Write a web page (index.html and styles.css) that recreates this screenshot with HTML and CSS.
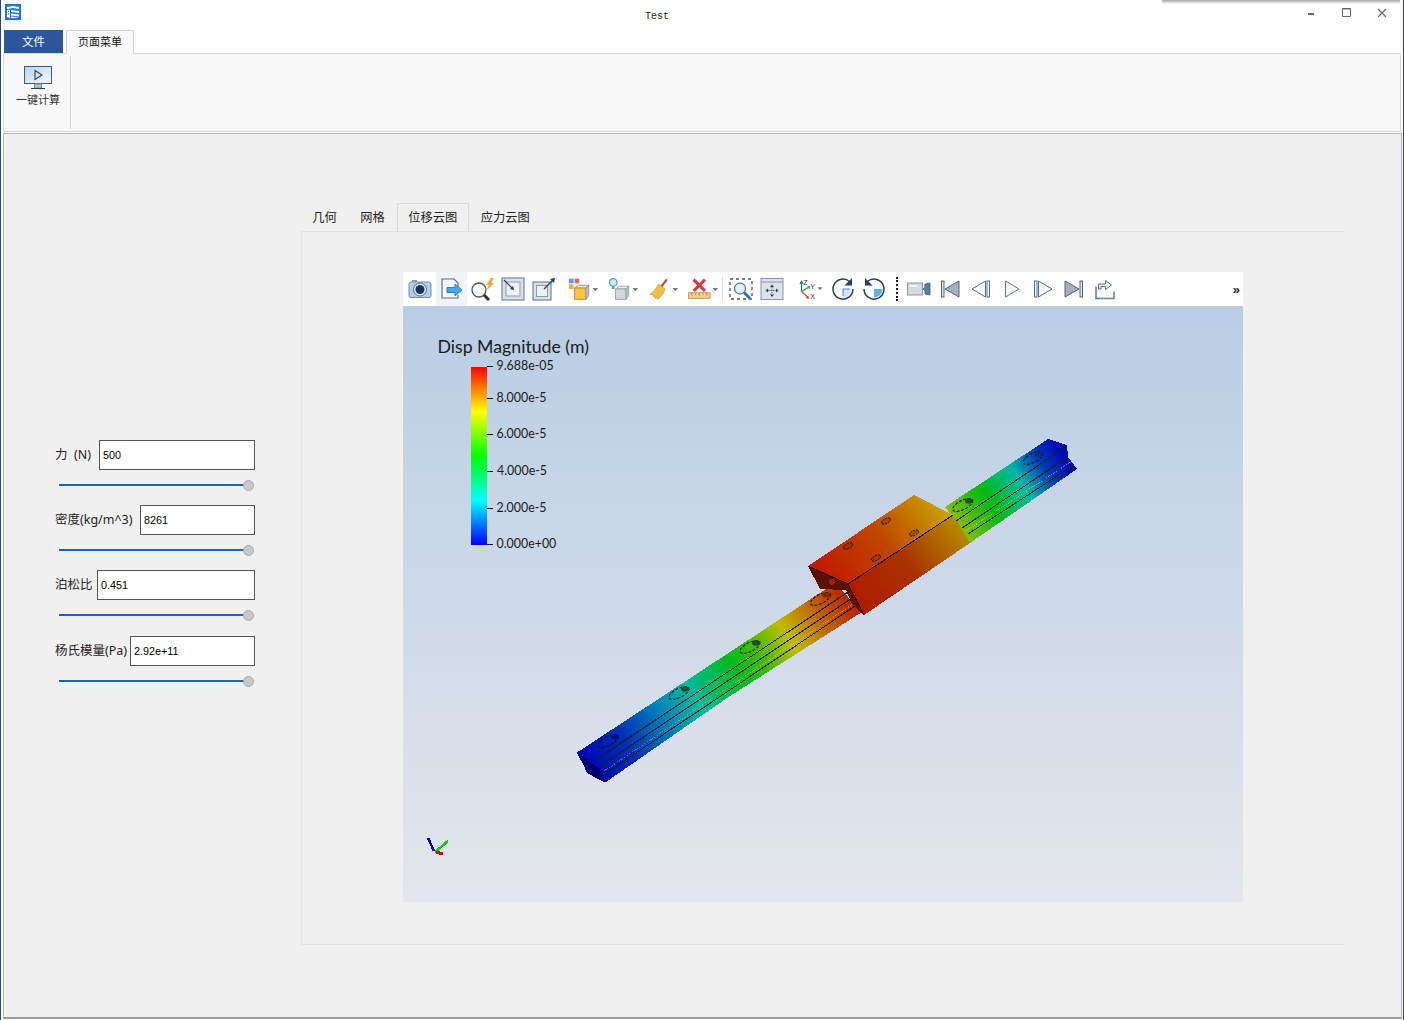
FILE: index.html
```html
<!DOCTYPE html>
<html lang="zh">
<head>
<meta charset="utf-8">
<title>Test</title>
<link rel="stylesheet" href="styles.css">
</head>
<body>
<div class="window">
  <div class="other-shadow"></div>
  <header class="titlebar">
    <svg class="app-icon" viewBox="0 0 16 16">
      <rect width="16" height="16" fill="#1c74e4"/>
      <path d="M2 3l6-1 6 1v2L8 4 2 5zM2 6l3-.5V14l-3-1zM6 6l8 1v2L6 8zM6 9.500l8 1V12.500l-8-1zM6 12.500l8 .8-6 1-2-.4z" fill="#fff"/>
      <path d="M3 7.500h1M3 10h1" stroke="#1c74e4"/>
    </svg>
    <div class="title">Test</div>
    <div class="win-controls">
      <span class="win-btn"><svg width="10" height="10" viewBox="0 0 10 10"><rect x="2" y="6" width="6" height="2" fill="#666"/></svg></span>
      <span class="win-btn win-btn-max"><svg width="10" height="10" viewBox="0 0 10 10"><path d="M.5 .5h8v8h-8z" fill="none" stroke="#666"/><path d="M0 1h9" stroke="#666"/></svg></span>
      <span class="win-btn win-btn-close"><svg width="10" height="10" viewBox="0 0 10 10"><path d="M1 1l8 8M9 1l-8 8" stroke="#666" stroke-width="1.100"/></svg></span>
    </div>
  </header>

  <nav class="menu-tabs">
    <div class="menu-file">文件</div>
    <div class="menu-page">页面菜单</div>
  </nav>

  <section class="ribbon">
    <div class="ribbon-group">
      <svg class="ribbon-icon" viewBox="0 0 28 24">
        <defs><linearGradient id="scr" x1="0" y1="0" x2="1" y2="1"><stop offset="0" stop-color="#bcd3ec"/><stop offset="1" stop-color="#f4f8fc"/></linearGradient></defs>
        <rect x=".5" y=".5" width="27" height="17" fill="url(#scr)" stroke="#40597c"/>
        <path d="M11 4.500l7 4.500-7 4.500z" fill="none" stroke="#24406e" stroke-width="1.100"/>
        <path d="M10.500 18h7v4h-7z" fill="#b7c3d0" stroke="#7d8ea3"/>
        <path d="M7 22.500h14" stroke="#24406e"/>
      </svg>
      <div class="ribbon-label">一键计算</div>
    </div>
  </section>

  <main class="panel">
    <form class="form">
      <div class="field"><label class="lbl lbl-force">力&nbsp;&nbsp;(N)</label><div class="input">500</div></div>
      <div class="slider"><span class="knob"></span></div>
      <div class="field"><label class="lbl lbl-density">密度(kg/m^3)</label><div class="input">8261</div></div>
      <div class="slider"><span class="knob"></span></div>
      <div class="field"><label class="lbl lbl-poisson">泊松比</label><div class="input">0.451</div></div>
      <div class="slider slider-last"><span class="knob"></span></div>
      <div class="field"><label class="lbl lbl-young">杨氏模量(Pa)</label><div class="input">2.92e+11</div></div>
      <div class="slider"><span class="knob"></span></div>
    </form>

    <section class="tabs">
      <div class="tab-bar">
        <div class="tab">几何</div>
        <div class="tab">网格</div>
        <div class="tab tab-active">位移云图</div>
        <div class="tab">应力云图</div>
      </div>
      <div class="tab-pane">
        <div class="viewer">
          <div class="toolbar">
            <span class="tb"><svg viewBox="0 0 24 24"><rect x="1" y="5" width="22" height="15.500" rx="2" fill="#b5cde6" stroke="#6f8fb3"/><rect x="4" y="3" width="5" height="2" fill="#7f9cbd"/><circle cx="12" cy="12.500" r="6.500" fill="#dfe9f4" stroke="#54708f"/><circle cx="12" cy="12.500" r="4.500" fill="#16315f"/></svg></span>
            <span class="tb tb-hover"><svg viewBox="0 0 24 24"><path d="M19 10V6l-4-4H3v19h16v-3" fill="#f4f6f8" stroke="#666c76" stroke-width="1.200"/><path d="M8 10.500h8V7l7 6-7 6v-3.500H8z" fill="#4aa8e6" stroke="#2f7fc0"/></svg></span>
            <span class="tb"><svg viewBox="0 0 24 24"><circle cx="9" cy="13" r="7" fill="#fbfcfd" stroke="#555" stroke-width="1.300"/><path d="M14 18l5 5" stroke="#333" stroke-width="3"/><path d="M21 1l-5 7h3l-3 6 8-8h-3l3-5z" fill="#f2a636"/></svg></span>
            <span class="tb"><svg viewBox="0 0 24 24"><rect x="1" y="1" width="22" height="22" fill="#dbe0e6" stroke="#7b8ea8" stroke-width="1.300"/><rect x="5" y="5" width="14" height="14" fill="#eef1f4" stroke="#8d9aab"/><path d="M3 3l9 9" stroke="#1f3a6b" stroke-width="1.200"/><path d="M13 13l-4-1 3-3z" fill="#1f3a6b"/></svg></span>
            <span class="tb"><svg viewBox="0 0 24 24"><rect x="1" y="5" width="18" height="18" fill="#dbe0e6" stroke="#7b8ea8" stroke-width="1.300"/><rect x="4.500" y="8.500" width="11" height="11" fill="#eef1f4" stroke="#8d9aab"/><path d="M12 12l9-9" stroke="#1f3a6b" stroke-width="1.200"/><path d="M23 1l-1 5-4-4z" fill="#1f3a6b"/></svg></span>
            <span class="tb tb-drop"><svg viewBox="0 0 34 24"><rect x="1" y="1" width="5" height="5" fill="#5aa5e8"/><rect x="7" y="1" width="5" height="5" fill="#d86a6a"/><rect x="1" y="7" width="5" height="5" fill="#f0b040"/><path d="M7 11l4-3h11l-3 3z" fill="#e3e6ea" stroke="#8a929c"/><rect x="7" y="11" width="12" height="12" fill="#fbc53e" stroke="#c09030"/><path d="M19 11l3-3v11l-3 4z" fill="#bcc3cb" stroke="#8a929c"/><path d="M26 11h6l-3 3z" fill="#777"/></svg></span>
            <span class="tb tb-drop"><svg viewBox="0 0 34 24"><circle cx="5.500" cy="5" r="4" fill="#cfe8fb" stroke="#4f9ed8" stroke-width="1.300"/><path d="M4 9h3v3H4z" fill="#888"/><path d="M8 12l4-3h10l-3 3z" fill="#eef0f2" stroke="#99a1aa"/><rect x="8" y="12" width="11" height="11" fill="#d3d8dd" stroke="#99a1aa"/><path d="M19 12l3-3v10l-3 4z" fill="#b8bec6" stroke="#99a1aa"/><path d="M26 11h6l-3 3z" fill="#777"/></svg></span>
            <span class="tb tb-drop"><svg viewBox="0 0 34 24"><path d="M19 1l2 1.500-6 8-2-1.500z" fill="#a8632a"/><path d="M11 7l7 5c-1 4-5 9-8 11l-1-3-1 2-2-2 0-2-4 0c3-2 7-7 9-11z" fill="#f3bd48" stroke="#c98f2a" stroke-width=".7"/><path d="M26 11h6l-3 3z" fill="#777"/></svg></span>
            <span class="tb tb-drop"><svg viewBox="0 0 34 24"><path d="M6 2l12 12M18 2L6 14" stroke="#d93b3b" stroke-width="3.200"/><rect x="0.500" y="16" width="23" height="6" fill="#f4cf88" stroke="#c99a4b"/><path d="M4 16v3M8 16v2M12 16v3M16 16v2M20 16v3" stroke="#a8762c" stroke-width=".8"/><path d="M26 11h6l-3 3z" fill="#777"/></svg></span>
            <span class="tb-sep"></span>
            <span class="tb"><svg viewBox="0 0 24 24"><rect x="1" y="2" width="22" height="20" fill="none" stroke="#3c5579" stroke-width="1.300" stroke-dasharray="3 3"/><circle cx="11" cy="11.500" r="5.500" fill="#e4eef7" stroke="#4c86bb" stroke-width="1.300"/><path d="M15 15.500l6 6" stroke="#2d6ea8" stroke-width="2.600"/></svg></span>
            <span class="tb"><svg viewBox="0 0 24 24"><rect x="1" y="1.500" width="22" height="21" fill="#dde2e8" stroke="#8595a9"/><path d="M1 5h22" stroke="#8595a9"/><path d="M12 7.500l2 2.500h-4zM12 20l2-2.500h-4zM5.500 13.500L8 11.500v4zM18.500 13.500L16 11.500v4z" fill="#27405f"/><path d="M12 10v7M8 13.500h8" stroke="#27405f" stroke-width=".8" stroke-dasharray="1.500 1"/></svg></span>
            <span class="tb-gap"></span>
            <span class="tb tb-drop tb-axes"><svg viewBox="0 0 34 24"><path d="M4 15V5" stroke="#2266c4" stroke-width="1.400"/><path d="M4 2l2.500 4h-5z" fill="#2266c4"/><path d="M4 15l8-5" stroke="#2ea844" stroke-width="1.400"/><path d="M14 8.500l-1 4-2.500-3.500z" fill="#2ea844"/><path d="M4 15l7 6" stroke="#d83a3a" stroke-width="1.400"/><path d="M13 23l-4-.6 2.400-3z" fill="#d83a3a"/><text x="6" y="7" class="axis-letter">Z</text><text x="14" y="12.500" class="axis-letter">Y</text><text x="14" y="23" class="axis-letter">X</text><path d="M22 10h6l-3 3z" fill="#777"/></svg></span>
            <span class="tb"><svg viewBox="0 0 24 24"><path d="M12 12h8.500A8.500 8.500 0 0 1 12 20.500z" fill="#cfe3f5"/><path d="M12 12h7M12 12v7" stroke="#2f7fc0" stroke-width=".9"/><path d="M18.500 4.500A10 10 0 1 0 22 12" fill="none" stroke="#27405f" stroke-width="1.500"/><path d="M21 1v7.500h-7.500z" fill="#27405f"/></svg></span>
            <span class="tb"><svg viewBox="0 0 24 24"><path d="M12 12h8.500A8.500 8.500 0 0 1 12 20.500z" fill="#5eaee8"/><path d="M5.500 4.500A10 10 0 1 1 2 12" fill="none" stroke="#27405f" stroke-width="1.500"/><path d="M3 1v7.500h7.500z" fill="#27405f"/></svg></span>
            <span class="tb-dots"></span>
            <span class="tb"><svg viewBox="0 0 24 24"><rect x="0.500" y="6" width="15" height="12" fill="#d5dae0" stroke="#8c98a8"/><path d="M3 9h7" stroke="#fff" stroke-width="1.500"/><path d="M16 12l2-2v-3l5-1v12l-5-1v-3z" fill="#5b7ea8" stroke="#3c5b85" stroke-width=".8"/></svg></span>
            <span class="tb"><svg viewBox="0 0 24 24"><rect x="3.500" y="4" width="2.500" height="16" fill="#e3e7ec" stroke="#4f6583"/><path d="M21 4v16L7 12z" fill="#a7afba" stroke="#4f6583"/></svg></span>
            <span class="tb"><svg viewBox="0 0 24 24"><path d="M16.500 4v16L3 12z" fill="#f4f6f8" stroke="#4f6f9a"/><rect x="18" y="4" width="2.500" height="16" fill="#f4f6f8" stroke="#4f6f9a"/></svg></span>
            <span class="tb"><svg viewBox="0 0 24 24"><path d="M5.500 4v16L19 12z" fill="#f7f9fb" stroke="#55749f"/></svg></span>
            <span class="tb"><svg viewBox="0 0 24 24"><rect x="3.500" y="4" width="2.500" height="16" fill="#f4f6f8" stroke="#4f6f9a"/><path d="M7.500 4v16L21 12z" fill="#f4f6f8" stroke="#4f6f9a"/></svg></span>
            <span class="tb"><svg viewBox="0 0 24 24"><path d="M3 4v16l14-8z" fill="#a7afba" stroke="#4f6583"/><rect x="18" y="4" width="2.500" height="16" fill="#e3e7ec" stroke="#4f6583"/></svg></span>
            <span class="tb"><svg viewBox="0 0 24 24"><path d="M3 9.500v12h18v-7" fill="none" stroke="#4f6f9a" stroke-width="1.400"/><path d="M5.500 15v-5h7V6.500l6 4.500-6 4.500V12.500H8V15z" transform="translate(0 -3)" fill="#e9eef4" stroke="#4f6f9a"/><path d="M6 21h14" stroke="#a8b8cc"/></svg></span>
            <span class="tb-more">»</span>
          </div>
          <svg class="scene" viewBox="403 306 840 596">
            <defs>
              <linearGradient id="bg" x1="0" y1="0" x2="0" y2="1"><stop offset="0" stop-color="#b9cde4"/><stop offset="1" stop-color="#e4e6ec"/></linearGradient>
              <linearGradient id="jet" x1="0" y1="0" x2="0" y2="1"><stop offset="0" stop-color="#ff0000"/><stop offset=".25" stop-color="#ffff00"/><stop offset=".5" stop-color="#00ff00"/><stop offset=".75" stop-color="#00ffff"/><stop offset="1" stop-color="#0000ff"/></linearGradient>
              <linearGradient id="railA" gradientUnits="userSpaceOnUse" x1="590" y1="767" x2="850" y2="595">
                <stop offset="0" stop-color="#0008b4"/><stop offset=".14" stop-color="#0030b4"/><stop offset=".3" stop-color="#0088b8"/><stop offset=".4" stop-color="#00b8a0"/><stop offset=".56" stop-color="#00bc20"/><stop offset=".65" stop-color="#40bc00"/><stop offset=".76" stop-color="#c0bc00"/><stop offset=".88" stop-color="#c06400"/><stop offset="1" stop-color="#b82000"/>
              </linearGradient>
              <linearGradient id="railB" gradientUnits="userSpaceOnUse" x1="1058" y1="448" x2="950" y2="522">
                <stop offset="0" stop-color="#0008b8"/><stop offset=".18" stop-color="#0040b4"/><stop offset=".38" stop-color="#00b8a8"/><stop offset=".66" stop-color="#00bc10"/><stop offset="1" stop-color="#98bc00"/>
              </linearGradient>
              <linearGradient id="blockTop" gradientUnits="userSpaceOnUse" x1="830" y1="580" x2="940" y2="500">
                <stop offset="0" stop-color="#c01c00"/><stop offset=".5" stop-color="#c04800"/><stop offset="1" stop-color="#c8a400"/>
              </linearGradient>
              <linearGradient id="blockSide" gradientUnits="userSpaceOnUse" x1="860" y1="605" x2="965" y2="530">
                <stop offset="0" stop-color="#b01c00"/><stop offset=".5" stop-color="#a83400"/><stop offset="1" stop-color="#b88c00"/>
              </linearGradient>
            </defs>
            <rect x="403" y="306" width="840" height="596" fill="url(#bg)"/>
            <text x="437.500" y="353" class="bar-title">Disp Magnitude (m)</text>
            <rect x="471" y="367" width="16" height="178" fill="url(#jet)"/>
            <path d="M487 366.500h6M487 398.500h6M487 434.500h6M487 471.500h6M487 508.500h6M487 544.500h6" stroke="#111" stroke-width="1"/>
            <text x="496.500" y="370" class="bar-label">9.688e-05</text>
            <text x="496.500" y="402" class="bar-label">8.000e-5</text>
            <text x="496.500" y="438" class="bar-label">6.000e-5</text>
            <text x="497" y="475" class="bar-label">4.000e-5</text>
            <text x="496.500" y="512" class="bar-label">2.000e-5</text>
            <text x="496.500" y="548" class="bar-label">0.000e+00</text>

            <g shape-rendering="crispEdges">
              <path d="M945 507L1048 439L1067 445L1068 457L1077 469L970 543L958 525z" fill="url(#railB)"/>
              <path d="M956 521L1064 448M962 528L1068 457M968 534L1074 465" fill="none" stroke="#14201c" stroke-width="1"/>
              <path d="M966 531L1072 461" fill="none" stroke="#d8e860" stroke-width="1" stroke-dasharray="1 1" opacity=".5"/>
              <path d="M576.700 752.700L835 583L862 612L727 698L605 782.700L601 779L587 773L583 764z" fill="url(#railA)"/>
              <path d="M576.700 752.700L583 764L587 773L605 782.700L602 770z" fill="#00006e"/>
              <path d="M597 759L848 592M600 766L852 598M606 773L858 604" fill="none" stroke="#14201c" stroke-width="1"/>
              <path d="M604 771L856 602" fill="none" stroke="#e8e040" stroke-width="1" stroke-dasharray="1 1" opacity=".45"/>
            </g>
            <g fill="none" stroke="#111" stroke-width="1" stroke-dasharray="3 1.500">
              <ellipse cx="608" cy="741" rx="11" ry="4.500" transform="rotate(-27 608 741)"/>
              <ellipse cx="679" cy="693" rx="11" ry="4.500" transform="rotate(-27 679 693)"/>
              <ellipse cx="750" cy="647" rx="11" ry="4.500" transform="rotate(-27 750 647)"/>
              <ellipse cx="820.500" cy="599" rx="11" ry="4.500" transform="rotate(-27 820.500 599)"/>
              <ellipse cx="962.700" cy="505" rx="11" ry="4.500" transform="rotate(-27 962.700 505)"/>
              <ellipse cx="1033" cy="458" rx="11" ry="4.500" transform="rotate(-27 1033 458)"/>
            </g>
            <g fill="#244c30">
              <ellipse cx="615" cy="737" rx="4" ry="2.500" fill="#00107a"/>
              <ellipse cx="685" cy="689" rx="4" ry="2.800"/>
              <ellipse cx="756" cy="643" rx="4" ry="2.800"/>
              <ellipse cx="826" cy="595" rx="4" ry="2.800" fill="#7a3000"/>
              <ellipse cx="969" cy="501" rx="4" ry="2.800"/>
              <ellipse cx="1039" cy="454" rx="4" ry="2.500" fill="#00307a"/>
            </g>
            <g shape-rendering="crispEdges">
              <path d="M808 566L914 495L953 515L848 584z" fill="url(#blockTop)"/>
              <path d="M848 584L953 515L970 543L864 615z" fill="url(#blockSide)"/>
              <path d="M808 566L848 584L864 615L852 604L846 590L820 589z" fill="#5c1000"/>
              <path d="M848 584L953 515" fill="none" stroke="#111" stroke-width="1"/>
              <path d="M808 566L848 584L864 615" fill="none" stroke="#2a0800" stroke-width="1"/>
            </g>
            <circle cx="832" cy="582" r="3" fill="#a02410"/>
            <g fill="#8a3000" fill-opacity=".5" stroke="#111" stroke-width=".8" stroke-dasharray="2 1">
              <ellipse cx="886" cy="521" rx="5" ry="2.500" transform="rotate(-27 886 521)"/>
              <ellipse cx="848" cy="546" rx="5" ry="2.500" transform="rotate(-27 848 546)"/>
              <ellipse cx="914" cy="533" rx="5" ry="2.500" transform="rotate(-27 914 533)"/>
              <ellipse cx="876" cy="558" rx="5" ry="2.500" transform="rotate(-27 876 558)"/>
            </g>
            <g shape-rendering="crispEdges" fill="none">
              <path d="M428 838L434 851" stroke="#0000e0" stroke-width="2.500"/>
              <path d="M435 852L448 841" stroke="#00d000" stroke-width="2.500"/>
              <path d="M436 852L443 854" stroke="#d00000" stroke-width="3"/>
            </g>
          </svg>
        </div>
      </div>
    </section>
  </main>
</div>
</body>
</html>
```

FILE: styles.css
```css
* { box-sizing: border-box; }

html, body {
  margin: 0;
  height: 100%;
  overflow: hidden;
  background: #fff;
}

body {
  font-family: "Noto Sans", "Noto Sans CJK SC", sans-serif;
  font-size: 12.5px;
  color: #1a1a1a;
}

.window {
  position: relative;
  width: 1404px;
  height: 1020px;
  display: flex;
  flex-direction: column;
  border-left: 1px solid #25497f;
  border-right: 1px solid #25497f;
  background: #fff;
  padding-bottom: 1px;
}

.other-shadow {
  position: absolute;
  top: 0;
  right: 3px;
  width: 238px;
  height: 4px;
  background: linear-gradient(#a8a8a8, rgba(255, 255, 255, 0));
}

/* title bar */
.titlebar {
  display: flex;
  align-items: flex-start;
  height: 30px;
  padding: 4px 0 0 4px;
}

.app-icon {
  width: 16px;
  height: 16px;
  flex: none;
}

.title {
  margin: 7px 0 0 624px;
  font-family: "Liberation Mono", monospace;
  font-size: 10px;
  line-height: 12px;
  color: #222;
}

.win-controls {
  display: flex;
  margin: 0 3px 0 auto;
}

.win-btn {
  display: flex;
  align-items: center;
  justify-content: center;
  width: 36px;
  height: 16px;
}

.win-btn-max { width: 35px; margin-top: 1px; }
.win-btn-close { margin-top: 1px; }

/* menu tabs */
.menu-tabs {
  display: flex;
  align-items: flex-end;
  height: 24px;
  padding-left: 3px;
  gap: 3px;
  margin-bottom: -1px;
  position: relative;
  z-index: 1;
}

.menu-file {
  width: 59px;
  height: 23px;
  background: #2b579a;
  color: #fff;
  text-align: center;
  line-height: 23px;
  font-size: 11.500px;
  margin-bottom: 1px;
}

.menu-page {
  width: 68px;
  height: 24px;
  background: #f8f8f8;
  border: 1px solid #d2d2d2;
  border-bottom: 0;
  text-align: center;
  line-height: 22px;
  font-size: 11px;
  color: #111;
}

/* ribbon */
.ribbon {
  height: 79px;
  margin: 0 2px;
  padding: 2px 0 2px;
  background: #f8f8f8;
  border: 1px solid #d6d6d6;
  display: flex;
}

.ribbon-group {
  width: 67px;
  display: flex;
  flex-direction: column;
  align-items: center;
  padding: 10px 0 0 2px;
  border-right: 1px solid #d8d8d8;
}

.ribbon-icon {
  width: 28px;
  height: 24px;
  flex: none;
}

.ribbon-label {
  margin-top: 2px;
  font-size: 11px;
  line-height: 16px;
  color: #333;
}

/* main panel */
.panel {
  flex: 1;
  margin: 1px 1px 0 2px;
  background: #f0f0f0;
  border: 1px solid #b4b4b4;
  border-bottom: 2px solid #a0a0a0;
  display: flex;
  align-items: flex-start;
  min-height: 0;
}

.form {
  width: 200px;
  margin: 306px 0 0 51px;
  flex: none;
}

.field {
  display: flex;
  align-items: center;
  height: 30px;
}

.lbl {
  flex: none;
  padding-bottom: 3px;
  font-size: 12.500px;
  color: #222;
  white-space: nowrap;
}

.lbl-force { width: 44px; }
.lbl-density { width: 85px; }
.lbl-poisson { width: 42px; }
.lbl-young { width: 75px; }

.input {
  flex: 1;
  height: 30px;
  padding: 0 3px;
  background: #fff;
  border: 1px solid #555;
  font-family: "Liberation Sans", sans-serif;
  font-size: 10.800px;
  line-height: 28px;
  color: #000;
}

.slider {
  position: relative;
  height: 35px;
  margin-left: 4px;
}

.slider::before {
  content: "";
  display: block;
  position: absolute;
  left: 0;
  right: 8px;
  top: 14px;
  height: 2px;
  background: #1366b8;
}

.slider-last { height: 36px; }

.knob {
  position: absolute;
  right: 1px;
  top: 10px;
  width: 11px;
  height: 11px;
  border-radius: 50%;
  background: #c8c8c8;
  border: 1px solid #aaa;
}

/* tabs */
.tabs {
  margin: 69px 0 0 46px;
  width: 1044px;
  flex: none;
}

.tab-bar {
  display: flex;
  gap: 1px;
  height: 28px;
  position: relative;
}

.tab {
  padding: 0 10.250px;
  height: 28px;
  line-height: 28px;
  border: 1px solid transparent;
  border-bottom: 0;
  color: #222;
  font-size: 12.250px;
}

.tab-active {
  border-color: #d9d9d9;
}

.tab-pane {
  height: 714px;
  padding: 40px 0 0 101px;
  border: 1px solid #e3e3e3;
  border-right: 0;
}

.viewer {
  width: 840px;
}

.toolbar {
  display: flex;
  align-items: center;
  height: 34px;
  padding-left: 2px;
  background: #fff;
}

.tb {
  display: flex;
  align-items: center;
  justify-content: center;
  width: 31px;
  height: 34px;
  padding-right: 1px;
  flex: none;
}

.tb svg {
  width: 24px;
  height: 24px;
}

.tb-hover { background: #eef4fa; }

.tb-drop { width: 40px; padding-right: 0; justify-content: flex-start; padding-left: 8px; }
.tb-drop svg { width: 34px; height: 24px; }

.tb-axes { width: 30px; padding-left: 0; }

.tb-sep {
  width: 1px;
  height: 24px;
  margin: 0 3px 0 2px;
  background: #dcdcdc;
  flex: none;
}

.tb-gap {
  width: 10px;
  flex: none;
}

.tb-dots {
  width: 0;
  height: 24px;
  margin: 0 6px 0 6px;
  border-left: 2px dotted #111;
  flex: none;
}

.tb-more {
  margin-left: auto;
  margin-right: 3px;
  font-family: "Liberation Sans", sans-serif;
  font-size: 13px;
  font-weight: bold;
  color: #222;
}

.axis-letter {
  font-family: "Liberation Sans", sans-serif;
  font-size: 8px;
  fill: #333;
}

.scene {
  display: block;
  width: 840px;
  height: 596px;
}

.bar-title {
  font-family: "Lato", sans-serif;
  font-size: 17.700px;
  fill: #1a1a1a;
}

.bar-label {
  font-family: "Lato", sans-serif;
  font-size: 12.400px;
  fill: #1a1a1a;
}
```
